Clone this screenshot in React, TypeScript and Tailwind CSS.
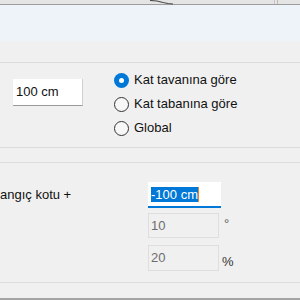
import React from "react";

function Radio({ checked, label }: { checked?: boolean; label: string }) {
  return (
    <div className="flex h-[24px] items-center">
      {checked ? (
        <span className="flex h-[15px] w-[15px] items-center justify-center rounded-full bg-[#0078d7]">
          <span className="h-[5px] w-[5px] rounded-full bg-white" />
        </span>
      ) : (
        <span className="h-[15px] w-[15px] rounded-full border border-[#333333] bg-[#f7f7f7]" />
      )}
      <span className="ml-[5px] whitespace-nowrap">{label}</span>
    </div>
  );
}

export default function App() {
  return (
    <div className="flex h-[300px] w-[300px] flex-col overflow-hidden bg-[#f0f0f0] font-['Liberation_Sans',Arial,sans-serif] text-[13px] text-[#111]">
      {/* drawing area edge */}
      <div className="relative h-[4px] shrink-0 bg-[#e4e4e4]">
        <svg className="absolute inset-0" width="300" height="5" viewBox="0 0 300 5">
          <path d="M150 0.5 L157 1 L163 2.5 L168 3.5 L173 4" stroke="#4a4a4a" strokeWidth="1.2" fill="none" />
          <line x1="274.5" y1="0" x2="274.5" y2="4" stroke="#c8c4d4" />
          <line x1="277.5" y1="0" x2="277.5" y2="4" stroke="#c8b8a4" />
        </svg>
      </div>
      <div className="h-px shrink-0 bg-[#9c9c9c]" />
      <div className="h-[36px] shrink-0 bg-[#eef3fa]" />
      <div className="h-[21px] shrink-0" />
      <div className="h-px shrink-0 bg-[#dcdcdc]" />

      {/* height reference */}
      <div className="flex h-[84px] shrink-0 items-start">
        <div className="ml-[13px] mt-[16px] flex h-[27px] w-[70px] items-center border-b border-r border-b-[#9a9a9a] border-r-[#d0d0d0] bg-white pl-[3px]">
          100 cm
        </div>
        <div className="ml-[31px] mt-[5px] flex flex-col">
          <Radio checked label="Kat tavanına göre" />
          <Radio label="Kat tabanına göre" />
          <Radio label="Global" />
        </div>
      </div>

      <div className="h-px shrink-0 bg-[#dcdcdc]" />
      <div className="h-[14px] shrink-0" />
      <div className="h-px shrink-0 bg-[#dcdcdc]" />

      {/* start elevation */}
      <div className="flex h-[119px] shrink-0 items-start">
        <div className="mt-[19px] flex h-[26px] w-[148px] items-center">
          <span className="whitespace-nowrap">angıç kotu +</span>
        </div>
        <div className="mt-[19px] flex flex-col">
          <div className="flex h-[26px] w-[73px] items-center border-b-2 border-[#0078d7] bg-white pl-[3px]">
            <span className="bg-[#0078d7] leading-[15px] text-white">-100 cm</span>
            <span className="h-[15px] w-px bg-[#e8832a]" />
          </div>
          <div className="mt-[5px] flex items-start">
            <div className="flex h-[25px] w-[71px] items-center border border-[#dedede] pl-[2px] text-[#6d6d6d]">10</div>
            <span className="ml-[5px] mt-[1px] text-[#555]">°</span>
          </div>
          <div className="mt-[7px] flex items-start">
            <div className="flex h-[26px] w-[71px] items-center border border-[#dedede] pl-[2px] text-[#6d6d6d]">20</div>
            <span className="ml-[3px] mt-[7px] text-[#333]">%</span>
          </div>
        </div>
      </div>

      <div className="h-px shrink-0 bg-[#dcdcdc]" />
      <div className="h-[15px] shrink-0" />
      <div className="h-[2px] shrink-0 bg-[#a4a4a4]" />
    </div>
  );
}
